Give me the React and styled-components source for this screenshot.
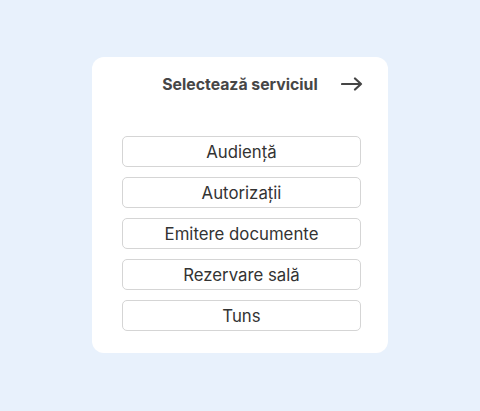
import React from "react";
import styled, { createGlobalStyle } from "styled-components";

const Global = createGlobalStyle`
  html, body { margin: 0; padding: 0; }
  body {
    background: #e8f1fc;
    font-family: Inter, "Noto Sans", sans-serif;
    -webkit-font-smoothing: antialiased;
  }
`;

const Page = styled.div`
  width: 480px;
  height: 411px;
  display: flex;
  align-items: flex-start;
  justify-content: center;
  padding-top: 57px;
  box-sizing: border-box;
`;

const Card = styled.div`
  width: 296px;
  height: 296px;
  box-sizing: border-box;
  background: #ffffff;
  border-radius: 12px;
  padding: 16px 27px 0 30px;
  display: flex;
  flex-direction: column;
`;

const Header = styled.div`
  position: relative;
  height: 22px;
  display: flex;
  align-items: center;
  justify-content: center;
  margin-bottom: 41px;
  margin-left: -30px;
  margin-right: -27px;
`;

const Title = styled.h2`
  margin: 0;
  font-size: 15.8px;
  font-weight: 700;
  color: #464646;
  letter-spacing: 0;
`;

const ArrowButton = styled.button`
  position: absolute;
  right: 25px;
  top: 50%;
  transform: translateY(-50%);
  border: 0;
  background: none;
  padding: 0;
  display: flex;
  cursor: pointer;
`;

const List = styled.div`
  display: flex;
  flex-direction: column;
  gap: 10px;
`;

const Option = styled.button`
  height: 31px;
  width: 100%;
  box-sizing: border-box;
  border: 1px solid #d5d5d5;
  border-radius: 5px;
  background: #ffffff;
  font-family: inherit;
  font-size: 16.8px;
  color: #333333;
  display: flex;
  align-items: center;
  justify-content: center;
  cursor: pointer;
`;

const services = ["Audiență", "Autorizații", "Emitere documente", "Rezervare sală", "Tuns"];

export default function App() {
  return (
    <>
      <Global />
      <Page>
        <Card>
          <Header>
            <Title>Selectează serviciul</Title>
            <ArrowButton aria-label="next">
              <svg width="22" height="14" viewBox="0 0 22 14" fill="none">
                <path d="M1 7h19M14 1.5L20 7l-6 5.5" stroke="#454545" strokeWidth="2.2" strokeLinecap="round" strokeLinejoin="round" />
              </svg>
            </ArrowButton>
          </Header>
          <List>
            {services.map((s) => (
              <Option key={s}>{s}</Option>
            ))}
          </List>
        </Card>
      </Page>
    </>
  );
}
